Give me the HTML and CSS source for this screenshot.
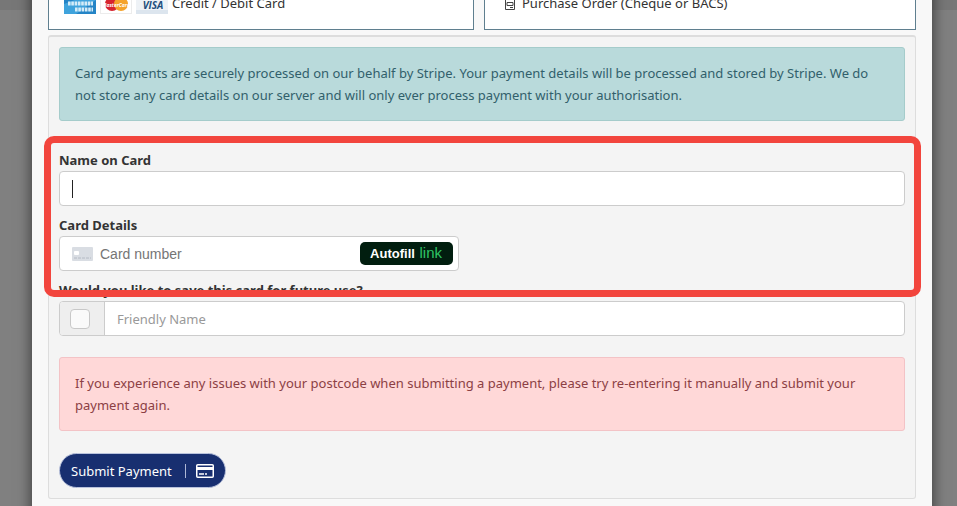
FILE: index.html
```html
<!DOCTYPE html>
<html lang="en">
  <head>
    <meta charset="UTF-8" />
    <meta name="viewport" content="width=device-width, initial-scale=1.0" />
    <title>Submit Payment</title>
    <link rel="stylesheet" href="styles.css">
  </head>
  <body>
    <div class="topbar"></div>
    <div class="modal">
      <div class="methods">
        <button type="button" class="method">
          <svg class="brand" viewBox="0 0 32 22">
            <rect width="32" height="22" fill="#2484c6" />
            <path d="M0 22V12L32 0V8L12 22z" fill="#3fa3dc" />
            <path d="M4 11.500h25M11 17.500h18" stroke="#d5ecf8" stroke-width="4" stroke-dasharray="2.600 .7" />
          </svg>
          <svg class="brand" viewBox="0 0 32 22">
            <rect x=".5" y="-1" width="31" height="22.500" fill="#fff" stroke="#ececec" />
            <circle cx="12" cy="12" r="7" fill="#d6232e" />
            <circle cx="21" cy="12" r="7" fill="#f5a32b" />
            <text x="16" y="15" class="mastercard">MasterCard</text>
          </svg>
          <svg class="brand" viewBox="0 0 32 22">
            <rect width="32" height="22" fill="#eef2f6" />
            <path d="M0 18h32v4H0z" fill="#dce5ee" />
            <text x="17" y="17" class="visa">VISA</text>
          </svg>
          <span>Credit / Debit Card</span>
        </button>
        <button type="button" class="method order">
          <svg class="doc" viewBox="0 0 12 16" fill="none" stroke="#444">
            <path d="M1.500 1.500h9v13h-9zM3 4.500h6M3 7.500h6v3H3zM6 12.500h3" />
          </svg>
          <span>Purchase Order (Cheque or BACS)</span>
        </button>
      </div>

      <form class="panel">
        <div class="alert alert-info">
          Card payments are securely processed on our behalf by Stripe. Your payment details will be processed and stored by Stripe. We do not store any card details on our server and will only ever process payment with your authorisation.
        </div>

        <div class="fields">
          <div class="form-group">
            <label for="card-name">Name on Card</label>
            <div class="control">
              <span class="caret"></span>
              <input id="card-name" type="text" />
            </div>
          </div>
          <div class="form-group">
            <label for="card-number">Card Details</label>
            <div class="control card-control">
              <svg class="card-icon" viewBox="0 0 21 14">
                <rect width="21" height="14" rx="1" fill="#d9dde3" />
                <rect x="2" y="4" width="5" height="4" rx="1" fill="#fff" />
                <path d="M2 11h17" stroke="#b4bac4" stroke-dasharray="3 1" />
              </svg>
              <input id="card-number" type="text" placeholder="Card number" />
              <button type="button" class="autofill">Autofill <span>link</span></button>
            </div>
          </div>
          <div class="form-group">
            <label for="friendly-name">Would you like to save this card for future use?</label>
            <div class="control save-control">
              <span class="addon"><input id="save-card" type="checkbox" aria-label="Save card" /></span>
              <input id="friendly-name" type="text" placeholder="Friendly Name" />
            </div>
          </div>
          <div class="highlight"></div>
        </div>

        <div class="alert alert-danger">
          If you experience any issues with your postcode when submitting a payment, please try re-entering it manually and submit your payment again.
        </div>

        <button type="submit" class="submit">
          <span>Submit Payment</span>
          <svg viewBox="0 0 18 14" fill="none" stroke="#fff">
            <rect x=".75" y=".75" width="16.500" height="12.500" rx="1" stroke-width="1.500" />
            <path d="M1 4.500h16" stroke-width="3" />
            <path d="M3 10h5M9 10h2" stroke-width="1.300" />
          </svg>
        </button>
      </form>
    </div>
  </body>
</html>
```

FILE: styles.css
```css
* {
  box-sizing: border-box;
}

body {
  margin: 0;
  background: #808080;
  font-family: "Noto Sans", sans-serif;
  font-size: 13px;
  line-height: 22px;
  color: #333;
  overflow: hidden;
}

button,
input {
  font: inherit;
}

.topbar {
  height: 10px;
  background: #777;
}

/* the dialog is scrolled a little past its top edge */
.modal {
  position: relative;
  margin: -50px 25px 0 32px;
  padding: 16px 16px 32px;
  background: #f8f8f8;
  box-shadow: 0 4px 14px rgba(0, 0, 0, 0.6);
}

.methods {
  display: grid;
  grid-template-columns: 71fr 72fr;
  gap: 10px;
}

.method {
  display: flex;
  align-items: center;
  gap: 4px;
  height: 54px;
  padding: 0 15px;
  border: 1px solid #5f7f8f;
  background: #fff;
  color: #333;
}

.brand {
  width: 32px;
  height: 22px;
}

.visa,
.mastercard {
  font-family: "Open Sans", sans-serif;
  font-size: 10px;
  font-weight: bold;
  font-style: italic;
  text-anchor: middle;
  fill: #1f4f7d;
}

.mastercard {
  font-size: 5px;
  fill: #fff;
}

.order {
  gap: 6px;
  padding: 0 19px;
}

.doc {
  width: 12px;
  height: 16px;
}

.panel {
  margin-top: 5px;
  padding: 10px;
  border: 1px solid #ddd;
  border-top: 2px solid #ddd;
  border-radius: 3px;
  background: #f4f4f4;
}

.alert {
  padding: 14px 15px;
  border: 1px solid;
  border-radius: 3px;
}

.alert-info {
  background: #b9dadb;
  border-color: #a5cccb;
  color: #31606b;
}

.alert-danger {
  background: #ffd8d8;
  border-color: #f3c3c6;
  color: #8c4044;
}

.fields {
  position: relative;
  margin: 28px 0 21px;
}

.form-group {
  margin-bottom: 8px;
}

.form-group label {
  display: block;
  font-weight: bold;
}

.control {
  display: flex;
  align-items: center;
  height: 35px;
  padding: 0 12px;
  border: 1px solid #ccc;
  border-radius: 4px;
  background: #fff;
}

.control input[type="text"] {
  flex: 1;
  min-width: 0;
  height: 100%;
  padding: 0;
  border: none;
  outline: none;
  background: transparent;
}

.control input::placeholder {
  color: #999;
}

.caret {
  width: 1px;
  height: 18px;
  background: #222;
}

.card-control {
  max-width: 400px;
  padding-right: 5px;
  font-family: "Liberation Sans", Arial, sans-serif;
  font-size: 14px;
}

.card-control input::placeholder {
  color: #757575;
}

.card-icon {
  width: 21px;
  height: 14px;
  margin-right: 7px;
}

.autofill {
  height: 23px;
  padding: 0 11px 0 10px;
  border: none;
  border-radius: 5px;
  background: #011e0f;
  color: #fff;
  font-size: 13px;
  font-weight: bold;
  line-height: 22px;
}

.autofill span {
  margin-left: 1px;
  color: #2fc565;
  font-size: 15px;
  font-weight: normal;
}

.save-control {
  padding-left: 0;
}

.addon {
  display: flex;
  align-items: center;
  justify-content: center;
  width: 45px;
  height: 100%;
  margin-right: 12px;
  border-right: 1px solid #ccc;
  border-radius: 3px 0 0 3px;
  background: #eee;
}

.addon input {
  appearance: none;
  width: 20px;
  height: 20px;
  margin: 0 4px 0 0;
  border: 1px solid #c8c8c8;
  border-radius: 4px;
  background: #fafafa;
}

/* red outline drawn over the two card fields */
.highlight {
  position: absolute;
  top: -13px;
  right: -16px;
  bottom: 39px;
  left: -15px;
  border: 7px solid #f2453d;
  border-radius: 10px;
  pointer-events: none;
}

.submit {
  display: flex;
  align-items: center;
  height: 35px;
  margin-top: 22px;
  padding: 0 11px;
  border: 1px solid #b9c2dc;
  border-radius: 18px;
  background: #182f70;
  color: #fff;
}

.submit span {
  padding-right: 13px;
}

.submit svg {
  box-sizing: content-box;
  width: 18px;
  height: 14px;
  padding-left: 10px;
  border-left: 1px solid #aeb8d6;
}
```
